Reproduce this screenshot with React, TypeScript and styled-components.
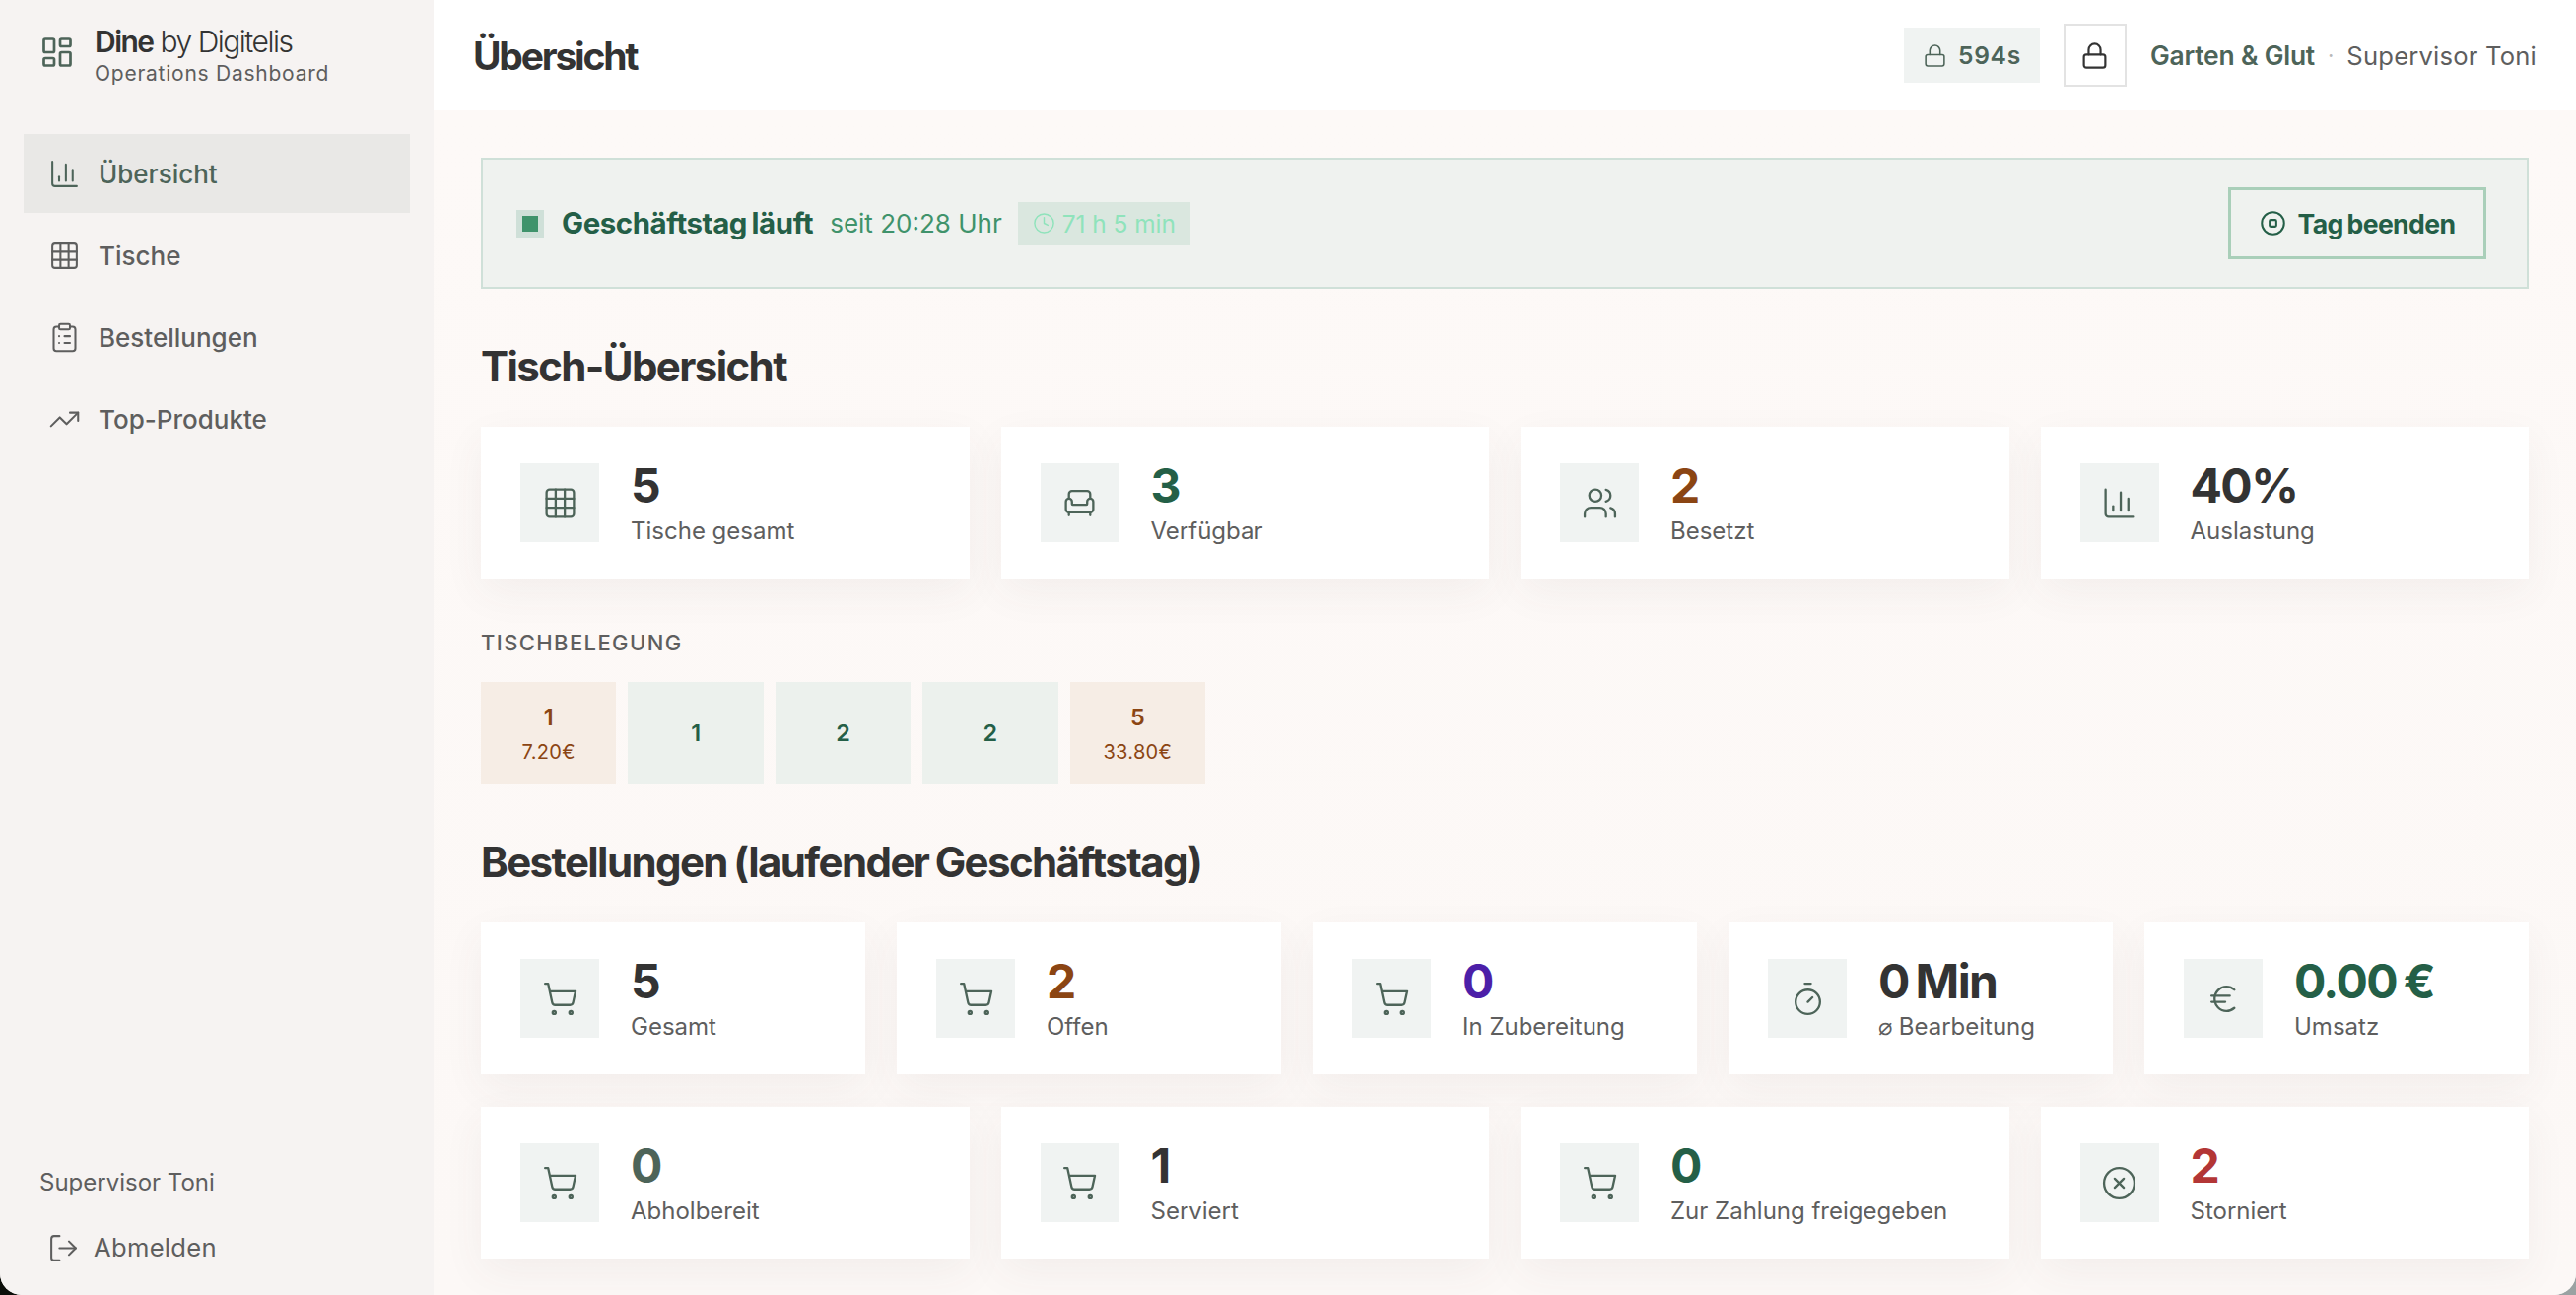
import React from "react";
import styled, { createGlobalStyle } from "styled-components";
import {
  Armchair,
  ChartColumn,
  CircleStop,
  CircleX,
  ClipboardList,
  Clock,
  Euro,
  Grid3x3,
  LayoutDashboard,
  Lock,
  LogOut,
  ShoppingCart,
  Timer,
  TrendingUp,
  Users,
} from "lucide-react";

const GlobalStyle = createGlobalStyle`
  html, body {
    margin: 0;
    padding: 0;
    width: 2614px;
    height: 1314px;
    overflow: hidden;
    background: linear-gradient(90deg, #0c0f0a 50%, #9aa2a2 50%);
  }
  * { box-sizing: border-box; }
  body {
    font-family: Inter, "Liberation Sans", sans-serif;
    color: #333333;
  }
`;

const Shell = styled.div`
  display: flex;
  width: 2614px;
  height: 1314px;
  overflow: hidden;
  border-radius: 0 0 22px 22px;
  background: #fdf9f7;
`;

const Sidebar = styled.aside`
  width: 440px;
  flex-shrink: 0;
  display: flex;
  flex-direction: column;
  padding: 0 24px;
  background: #f6f3f2;
`;

const Brand = styled.div`
  height: 136px;
  padding: 22px 16px 0;
  display: flex;
  align-items: flex-start;
  gap: 20px;
  color: #4d6459;
`;

const BrandIcon = styled.span`
  display: flex;
  margin-top: 13px;
`;

const BrandText = styled.div`
  display: flex;
  flex-direction: column;
`;

const BrandName = styled.div`
  font-size: 30px;
  line-height: 40px;
  letter-spacing: -1.5px;
  color: #333333;
  font-weight: 300;
  & b {
    font-weight: 600;
  }
`;

const BrandSub = styled.div`
  margin-top: -1px;
  font-size: 21px;
  line-height: 28px;
  letter-spacing: 0.75px;
  color: #5e5e5e;
`;

const Nav = styled.nav`
  display: flex;
  flex-direction: column;
  gap: 3.3px;
`;

const NavItem = styled.a<{ $active?: boolean }>`
  display: flex;
  align-items: center;
  gap: 18px;
  height: 80px;
  padding: 0 25px;
  font-size: 26px;
  font-weight: 500;
  color: ${(p) => (p.$active ? "#4d6459" : "#5e5e5e")};
  background: ${(p) => (p.$active ? "#e9e8e6" : "transparent")};
`;

const SideFooter = styled.div`
  margin-top: auto;
  padding: 0 16px 30px;
  display: flex;
  flex-direction: column;
  gap: 33px;
  color: #5e5e5e;
`;

const UserName = styled.div`
  font-size: 24px;
  line-height: 30px;
`;

const SignOut = styled.a`
  display: flex;
  align-items: center;
  gap: 14px;
  padding-left: 8px;
  font-size: 25.6px;
  line-height: 36px;
  letter-spacing: 0.3px;
`;

const Column = styled.div`
  flex: 1;
  min-width: 0;
  display: flex;
  flex-direction: column;
`;

const Topbar = styled.header`
  height: 112px;
  flex-shrink: 0;
  display: flex;
  align-items: center;
  padding: 0 40px;
  background: #ffffff;
`;

const PageTitle = styled.h1`
  margin: 0;
  font-size: 39px;
  font-weight: 700;
  letter-spacing: -2.2px;
  color: #333333;
`;

const TopRight = styled.div`
  margin-left: auto;
  display: flex;
  align-items: center;
`;

const Countdown = styled.div`
  width: 138px;
  height: 56px;
  display: flex;
  align-items: center;
  justify-content: center;
  gap: 11px;
  background: #f0f3f2;
  color: #4d6459;
  font-size: 24.6px;
  font-weight: 600;
  letter-spacing: 0.7px;
`;

const LockButton = styled.button`
  width: 64px;
  height: 64px;
  margin: 0 24px;
  padding: 0;
  display: flex;
  align-items: center;
  justify-content: center;
  background: #ffffff;
  border: 2px solid #e3e3e3;
  color: #333333;
`;

const Venue = styled.span`
  font-size: 26.4px;
  font-weight: 600;
  color: #4d6459;
  letter-spacing: -0.2px;
`;

const Dot = styled.span`
  margin: 0 13px;
  font-size: 22px;
  color: #b9b9b9;
`;

const Role = styled.span`
  font-size: 25.6px;
  color: #5e5e5e;
  letter-spacing: 0.2px;
`;

const Content = styled.main`
  flex: 1;
  padding: 48px 48px 0;
  display: flex;
  flex-direction: column;
  background: linear-gradient(180deg, #fdf9f7 0%, #fcf8f6 100%);
`;

const DayBanner = styled.section`
  height: 133px;
  flex-shrink: 0;
  display: flex;
  align-items: center;
  padding: 0 41px 0 34px;
  background: #eff2ef;
  border: 2px solid #cfe0d8;
`;

const LiveMark = styled.span`
  width: 28px;
  height: 28px;
  display: flex;
  align-items: center;
  justify-content: center;
  background: #cfe0d8;
  &::after {
    content: "";
    width: 16px;
    height: 16px;
    background: #3f936b;
  }
`;

const DayTitle = styled.span`
  margin-left: 18px;
  font-size: 29.4px;
  font-weight: 700;
  letter-spacing: -0.4px;
  word-spacing: -2px;
  color: #245f47;
`;

const DaySince = styled.span`
  margin-left: 17px;
  font-size: 26px;
  color: #3f936b;
`;

const DayTimer = styled.span`
  margin-left: 16px;
  height: 44px;
  padding: 0 15px;
  display: flex;
  align-items: center;
  gap: 7px;
  background: #dae7df;
  color: #8fe3bb;
  font-size: 24.4px;
`;

const EndButton = styled.button`
  margin-left: auto;
  width: 262px;
  height: 73px;
  display: flex;
  align-items: center;
  justify-content: center;
  gap: 12px;
  padding: 0;
  background: transparent;
  border: 3px solid #a9cfb9;
  color: #245f47;
  font-family: inherit;
  font-size: 26.6px;
  font-weight: 700;
  letter-spacing: -0.6px;
  word-spacing: -2px;
`;

const SectionTitle = styled.h2<{ $top: number }>`
  margin: ${(p) => p.$top}px 0 0;
  height: 58px;
  line-height: 58px;
  font-size: 42px;
  font-weight: 700;
  letter-spacing: -1.6px;
  word-spacing: -2px;
  color: #333333;
`;

const StatRow = styled.div<{ $cols: number; $top: number }>`
  display: grid;
  grid-template-columns: repeat(${(p) => p.$cols}, 1fr);
  gap: 32px;
  margin-top: ${(p) => p.$top}px;
`;

const StatCard = styled.div`
  height: 154px;
  display: flex;
  align-items: center;
  gap: 32px;
  padding: 0 40px;
  background: #ffffff;
  box-shadow: 0 14px 40px rgba(90, 70, 60, 0.06);
`;

const StatIcon = styled.span`
  width: 80px;
  height: 80px;
  flex-shrink: 0;
  display: flex;
  align-items: center;
  justify-content: center;
  background: #f0f3f2;
  color: #4d6459;
`;

const StatText = styled.div`
  display: flex;
  flex-direction: column;
`;

const StatValue = styled.div<{ $color: string }>`
  font-size: 48px;
  line-height: 54px;
  font-weight: 700;
  letter-spacing: -1.6px;
  word-spacing: -3px;
  color: ${(p) => p.$color};
`;

const StatLabel = styled.div`
  margin-top: 3px;
  font-size: 24px;
  line-height: 32px;
  color: #5e5e5e;
`;

const OccupancyLabel = styled.div`
  margin-top: 50px;
  font-size: 22px;
  line-height: 30px;
  font-weight: 500;
  letter-spacing: 1.4px;
  color: #5e5e5e;
`;

const TileRow = styled.div`
  display: flex;
  gap: 12px;
  margin-top: 25px;
`;

const TableTile = styled.div<{ $busy?: boolean }>`
  width: 137.4px;
  height: 104px;
  display: flex;
  flex-direction: column;
  align-items: center;
  justify-content: center;
  background: ${(p) => (p.$busy ? "#f6ede5" : "#ecf1ed")};
  color: ${(p) => (p.$busy ? "#8b4513" : "#245f47")};
`;

const TileNumber = styled.div`
  font-size: 23.4px;
  line-height: 34px;
  font-weight: 600;
`;

const TileAmount = styled.div`
  margin-top: 4px;
  font-size: 20px;
  line-height: 28px;
  letter-spacing: 0.3px;
`;

const INK = "#333333";
const GREEN = "#245f47";
const BROWN = "#8b4513";

const tableStats = [
  { icon: Grid3x3, value: "5", label: "Tische gesamt", color: INK },
  { icon: Armchair, value: "3", label: "Verfügbar", color: GREEN },
  { icon: Users, value: "2", label: "Besetzt", color: BROWN },
  { icon: ChartColumn, value: "40%", label: "Auslastung", color: INK },
];

const tiles = [
  { number: "1", amount: "7.20€" },
  { number: "1" },
  { number: "2" },
  { number: "2" },
  { number: "5", amount: "33.80€" },
];

const orderStats = [
  { icon: ShoppingCart, value: "5", label: "Gesamt", color: INK },
  { icon: ShoppingCart, value: "2", label: "Offen", color: BROWN },
  { icon: ShoppingCart, value: "0", label: "In Zubereitung", color: "#4c1fa8" },
  { icon: Timer, value: "0 Min", label: "⌀ Bearbeitung", color: INK },
  { icon: Euro, value: "0.00 €", label: "Umsatz", color: GREEN },
];

const orderStatusStats = [
  { icon: ShoppingCart, value: "0", label: "Abholbereit", color: "#4d6459" },
  { icon: ShoppingCart, value: "1", label: "Serviert", color: INK },
  { icon: ShoppingCart, value: "0", label: "Zur Zahlung freigegeben", color: GREEN },
  { icon: CircleX, value: "2", label: "Storniert", color: "#b33636" },
];

const navItems = [
  { icon: ChartColumn, label: "Übersicht", active: true },
  { icon: Grid3x3, label: "Tische" },
  { icon: ClipboardList, label: "Bestellungen" },
  { icon: TrendingUp, label: "Top-Produkte" },
];

type Stat = (typeof tableStats)[number];

const StatGrid = ({ stats, cols, top }: { stats: Stat[]; cols: number; top: number }) => (
  <StatRow $cols={cols} $top={top}>
    {stats.map((s) => (
      <StatCard key={s.label}>
        <StatIcon>
          <s.icon size={37} strokeWidth={1.5} />
        </StatIcon>
        <StatText>
          <StatValue $color={s.color}>{s.value}</StatValue>
          <StatLabel>{s.label}</StatLabel>
        </StatText>
      </StatCard>
    ))}
  </StatRow>
);

const App: React.FC = () => (
  <Shell>
    <GlobalStyle />
    <Sidebar>
      <Brand>
        <BrandIcon>
          <LayoutDashboard size={36} strokeWidth={1.8} />
        </BrandIcon>
        <BrandText>
          <BrandName>
            <b>Dine</b> by Digitelis
          </BrandName>
          <BrandSub>Operations Dashboard</BrandSub>
        </BrandText>
      </Brand>
      <Nav>
        {navItems.map((n) => (
          <NavItem key={n.label} $active={n.active}>
            <n.icon size={33} strokeWidth={1.5} />
            {n.label}
          </NavItem>
        ))}
      </Nav>
      <SideFooter>
        <UserName>Supervisor Toni</UserName>
        <SignOut>
          <LogOut size={33} strokeWidth={1.5} />
          Abmelden
        </SignOut>
      </SideFooter>
    </Sidebar>
    <Column>
      <Topbar>
        <PageTitle>Übersicht</PageTitle>
        <TopRight>
          <Countdown>
            <Lock size={25} strokeWidth={1.5} />
            594s
          </Countdown>
          <LockButton>
            <Lock size={29} strokeWidth={1.8} />
          </LockButton>
          <Venue>Garten &amp; Glut</Venue>
          <Dot>·</Dot>
          <Role>Supervisor Toni</Role>
        </TopRight>
      </Topbar>
      <Content>
        <DayBanner>
          <LiveMark />
          <DayTitle>Geschäftstag läuft</DayTitle>
          <DaySince>seit 20:28 Uhr</DaySince>
          <DayTimer>
            <Clock size={23} strokeWidth={1.5} />
            71 h 5 min
          </DayTimer>
          <EndButton>
            <CircleStop size={27} strokeWidth={1.8} />
            Tag beenden
          </EndButton>
        </DayBanner>
        <SectionTitle $top={50}>Tisch-Übersicht</SectionTitle>
        <StatGrid stats={tableStats} cols={4} top={32} />
        <OccupancyLabel>TISCHBELEGUNG</OccupancyLabel>
        <TileRow>
          {tiles.map((t, i) => (
            <TableTile key={i} $busy={!!t.amount}>
              <TileNumber>{t.number}</TileNumber>
              {t.amount && <TileAmount>{t.amount}</TileAmount>}
            </TableTile>
          ))}
        </TileRow>
        <SectionTitle $top={50}>Bestellungen (laufender Geschäftstag)</SectionTitle>
        <StatGrid stats={orderStats} cols={5} top={32} />
        <StatGrid stats={orderStatusStats} cols={4} top={33} />
      </Content>
    </Column>
  </Shell>
);

export default App;
